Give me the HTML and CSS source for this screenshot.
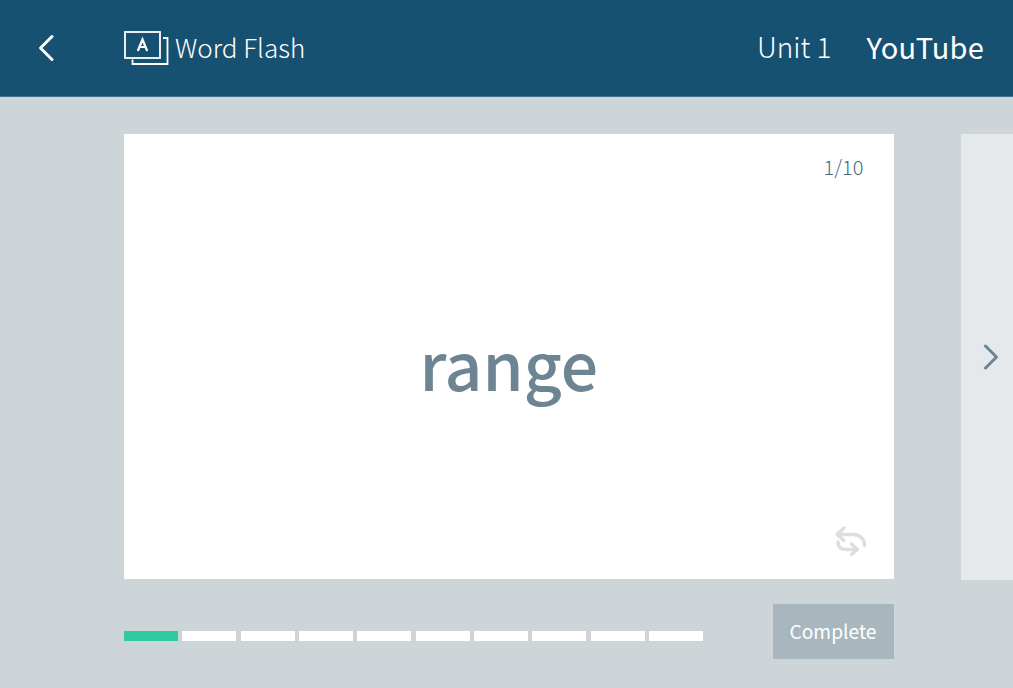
FILE: index.html
```html
<!DOCTYPE html>
<html lang="en">
<head>
    <meta charset="UTF-8">
    <meta name="viewport" content="width=device-width, initial-scale=1.0">
    <title>Word Flash</title>
    <link rel="stylesheet" href="styles.css">
</head>
<body>
    <header class="top-bar">
        <a class="back-link" href="#" aria-label="Back">
            <svg width="18" height="28" viewBox="0 0 18 28" fill="none" stroke="#fff" stroke-width="3" stroke-linecap="round" stroke-linejoin="round"><path d="M15 2.5 L3.5 14 L15 25.5"/></svg>
        </a>
        <div class="title">
            <svg class="title-icon" width="45" height="35" viewBox="0 0 45 35" fill="none" stroke="#fff" stroke-width="1.8">
                <rect x="1" y="1" width="35" height="26"/>
                <path d="M39 7 H43.5 V33 H8.5 V28.5"/>
                <path d="M13.8 20 L18.5 8.5 L23.2 20 M15.5 16 H21.5" stroke-width="2.2"/>
            </svg>
            <span>Word Flash</span>
        </div>
        <div class="unit">Unit 1</div>
        <div class="source">YouTube</div>
    </header>

    <main class="stage">
        <section class="card">
            <div class="counter">1/10</div>
            <div class="word">range</div>
            <svg class="flip-icon" width="34" height="32" viewBox="0 0 34 32" fill="none" stroke="#dcdedf" stroke-width="3.4" stroke-linecap="round" stroke-linejoin="round">
                <path d="M10 3 L3 9.5 L10 15.5"/>
                <path d="M3.5 9.5 H19 C26 9.5 30.5 14 30.5 20.5"/>
                <path d="M4 17 C4 22 7 24.5 12 24.5 H22"/>
                <path d="M17.5 19 L23.5 24.5 L17.5 29.5"/>
            </svg>
        </section>
        <div class="next-card">
            <svg width="16" height="26" viewBox="0 0 16 26" fill="none" stroke="#6d8493" stroke-width="3" stroke-linecap="round" stroke-linejoin="round"><path d="M2.5 2 L13.5 13 L2.5 24"/></svg>
        </div>
    </main>

    <footer class="bottom-row">
        <div class="progress">
            <span class="step done"></span>
            <span class="step"></span>
            <span class="step"></span>
            <span class="step"></span>
            <span class="step"></span>
            <span class="step"></span>
            <span class="step"></span>
            <span class="step"></span>
            <span class="step"></span>
            <span class="step"></span>
        </div>
        <button class="complete-button">Complete</button>
    </footer>
</body>
</html>
```

FILE: styles.css
```css
html, body {
    height: 100%;
}
body {
    margin: 0;
    background-color: #cdd5d9;
    font-family: "Noto Sans CJK KR", "Noto Sans", sans-serif;
    overflow: hidden;
}
.top-bar {
    display: flex;
    align-items: center;
    box-sizing: border-box;
    height: 97px;
    padding-right: 29px;
    background-color: #175171;
    border-bottom: 1px solid #3f6f8a;
    color: #fff;
}
.back-link {
    display: flex;
    width: 124px;
    padding-left: 37px;
    box-sizing: border-box;
}
.title {
    display: flex;
    align-items: center;
    gap: 6px;
    flex: 1;
    font-size: 26px;
    font-weight: 300;
}
.title span {
    padding-bottom: 3px;
}
.unit {
    padding-bottom: 4px;
    font-size: 28px;
    font-weight: 300;
    margin-right: 35px;
}
.source {
    padding-bottom: 4px;
    font-size: 29px;
    font-weight: 400;
    letter-spacing: 0.2px;
}
.stage {
    display: flex;
    gap: 67.5px;
    margin-top: 37px;
    padding-left: 124px;
}
.card {
    position: relative;
    display: flex;
    align-items: center;
    justify-content: center;
    flex: 0 0 769.5px;
    height: 445px;
    background-color: #fff;
}
.counter {
    position: absolute;
    top: 18px;
    right: 30px;
    font-size: 20px;
    font-weight: 300;
    color: #4a6a82;
}
.word {
    padding-top: 10px;
    font-size: 66px;
    font-weight: 500;
    line-height: 1;
    color: #6d8493;
}
.flip-icon {
    position: absolute;
    right: 26px;
    bottom: 22px;
}
.next-card {
    display: flex;
    align-items: center;
    flex: 1;
    height: 446px;
    padding-left: 22px;
    background-color: #e6e9ec;
}
.bottom-row {
    display: flex;
    align-items: flex-start;
    justify-content: space-between;
    width: 769.5px;
    margin: 24px 0 0 124px;
}
.progress {
    display: flex;
    gap: 4.33px;
    width: 579px;
    margin-top: 27px;
}
.step {
    flex: 1;
    height: 10px;
    background-color: #fff;
}
.step.done {
    background-color: #31c9a2;
}
.complete-button {
    width: 121px;
    height: 55px;
    padding: 0 0 2px;
    border: none;
    background-color: #a8b7be;
    color: #fff;
    font-family: inherit;
    font-size: 19.2px;
}
```
